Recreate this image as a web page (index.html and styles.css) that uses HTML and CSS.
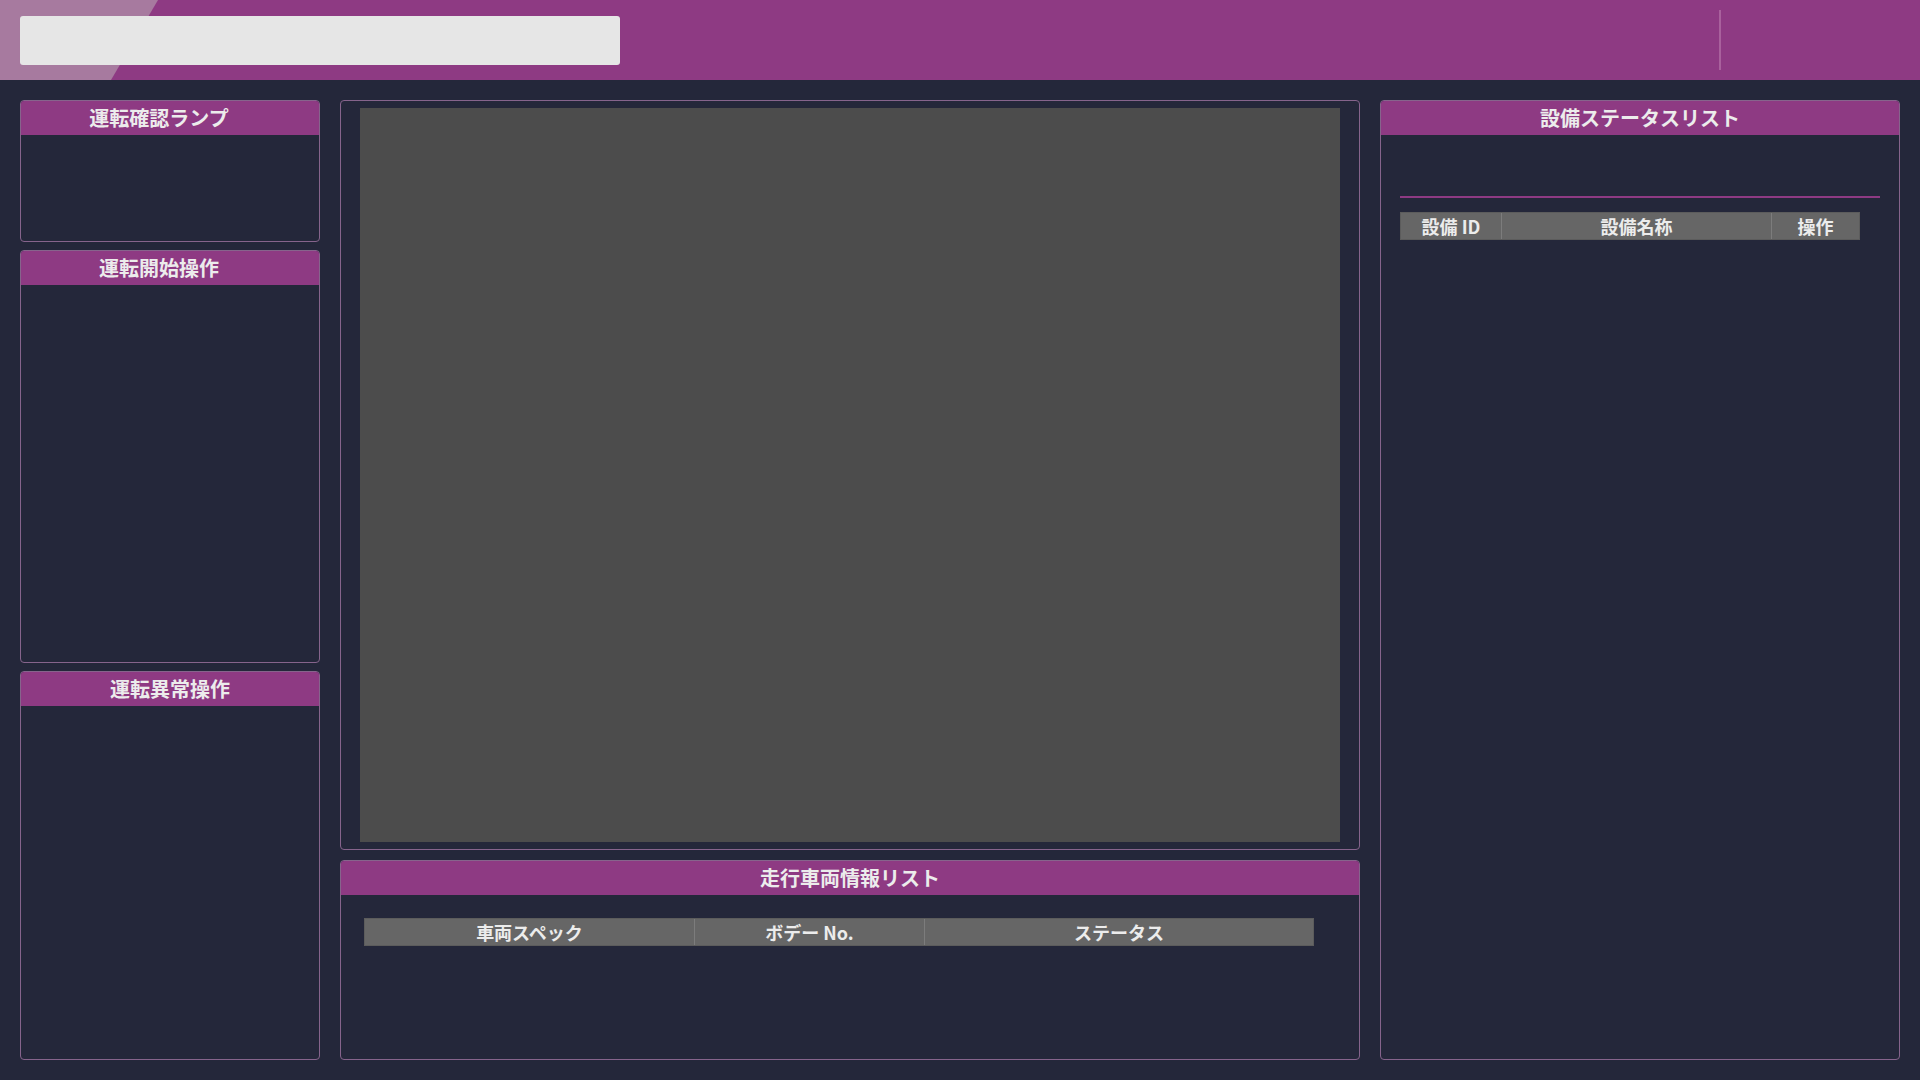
FILE: index.html
```html
<!DOCTYPE html>
<html lang="ja">
<head>
<meta charset="utf-8">
<title>運転監視</title>
<link rel="stylesheet" href="styles.css">
</head>
<body>
<header class="topbar">
  <div class="search-box"></div>
  <div class="topbar-divider"></div>
  <div class="topbar-right"></div>
</header>
<main class="layout">
  <div class="col col-left">
    <section class="panel panel-lamp">
      <h2 class="panel-title title-offset">運転確認ランプ</h2>
    </section>
    <section class="panel panel-start">
      <h2 class="panel-title title-offset">運転開始操作</h2>
    </section>
    <section class="panel panel-error">
      <h2 class="panel-title">運転異常操作</h2>
    </section>
  </div>
  <div class="col col-center">
    <section class="panel panel-view">
      <div class="view-area"></div>
    </section>
    <section class="panel panel-vehicles">
      <h2 class="panel-title">走行車両情報リスト</h2>
      <div class="table vehicle-table">
        <div class="th th-spec">車両スペック</div>
        <div class="th th-body">ボデー No.</div>
        <div class="th th-status">ステータス</div>
      </div>
    </section>
  </div>
  <div class="col col-right">
    <section class="panel panel-equip">
      <h2 class="panel-title">設備ステータスリスト</h2>
      <div class="equip-body">
        <div class="equip-rule"></div>
        <div class="table equip-table">
          <div class="th th-id">設備 ID</div>
          <div class="th th-name">設備名称</div>
          <div class="th th-op">操作</div>
        </div>
      </div>
    </section>
  </div>
</main>
</body>
</html>
```
FILE: styles.css
```css
* { box-sizing: border-box; }
html, body { margin: 0; padding: 0; }
body {
  width: 1920px;
  height: 1080px;
  background: #24273a;
  font-family: "Noto Sans CJK JP", "Noto Sans", sans-serif;
  color: #ececec;
  overflow: hidden;
}

.topbar {
  position: relative;
  height: 80px;
  background: #8e3a83;
  display: flex;
  align-items: center;
  padding-left: 20px;
}
.topbar::before {
  content: "";
  position: absolute;
  left: 0; top: 0;
  width: 160px; height: 80px;
  background: #a77a9f;
  clip-path: polygon(0 0, 158px 0, 111px 80px, 0 80px);
}
.search-box {
  position: relative;
  width: 600px;
  height: 49px;
  background: #e6e6e6;
  border-radius: 3px;
}
.topbar-divider {
  margin-left: auto;
  width: 2px;
  height: 60px;
  background: #a9619d;
}
.topbar-right { width: 199px; }

.layout {
  display: flex;
  gap: 20px;
  padding: 20px;
  height: 1000px;
}
.col { display: flex; flex-direction: column; }
.col-left { width: 300px; gap: 8px; }
.col-center { width: 1020px; gap: 10px; }
.col-right { width: 520px; }

.panel {
  border: 1px solid #86648c;
  border-radius: 4px;
  background: #24273a;
  overflow: hidden;
}
.panel-title {
  margin: 0;
  height: 34px;
  line-height: 33px;
  background: #8e3a83;
  font-size: 20px;
  font-weight: 700;
  text-align: center;
  color: #ececec;
}
.title-offset { padding-right: 22px; }

.panel-lamp { height: 142px; }
.panel-start { height: 413px; }
.panel-error { flex: 1; }

.panel-view {
  height: 750px;
  padding: 7px 19px;
}
.view-area {
  width: 100%;
  height: 100%;
  background: #4c4c4c;
}
.panel-vehicles { flex: 1; }

.table {
  display: flex;
  height: 28px;
  background: #666666;
  border: 1px solid #5c5c5c;
}
.th {
  font-size: 18px;
  font-weight: 700;
  line-height: 26px;
  text-align: center;
  color: #ececec;
  border-left: 1px solid #7c7c7c;
}
.th:first-child { border-left: none; }

.vehicle-table {
  width: 950px;
  margin: 23px 0 0 23px;
}
.th-spec { width: 329px; }
.th-body { width: 230px; }
.th-status { flex: 1; }

.panel-equip { flex: 1; }
.equip-body { padding: 61px 19px 0 19px; }
.equip-rule {
  height: 2px;
  background: #8e3a83;
}
.equip-table {
  width: 460px;
  margin-top: 14px;
}
.th-id { width: 100px; }
.th-name { width: 270px; }
.th-op { flex: 1; }
```
